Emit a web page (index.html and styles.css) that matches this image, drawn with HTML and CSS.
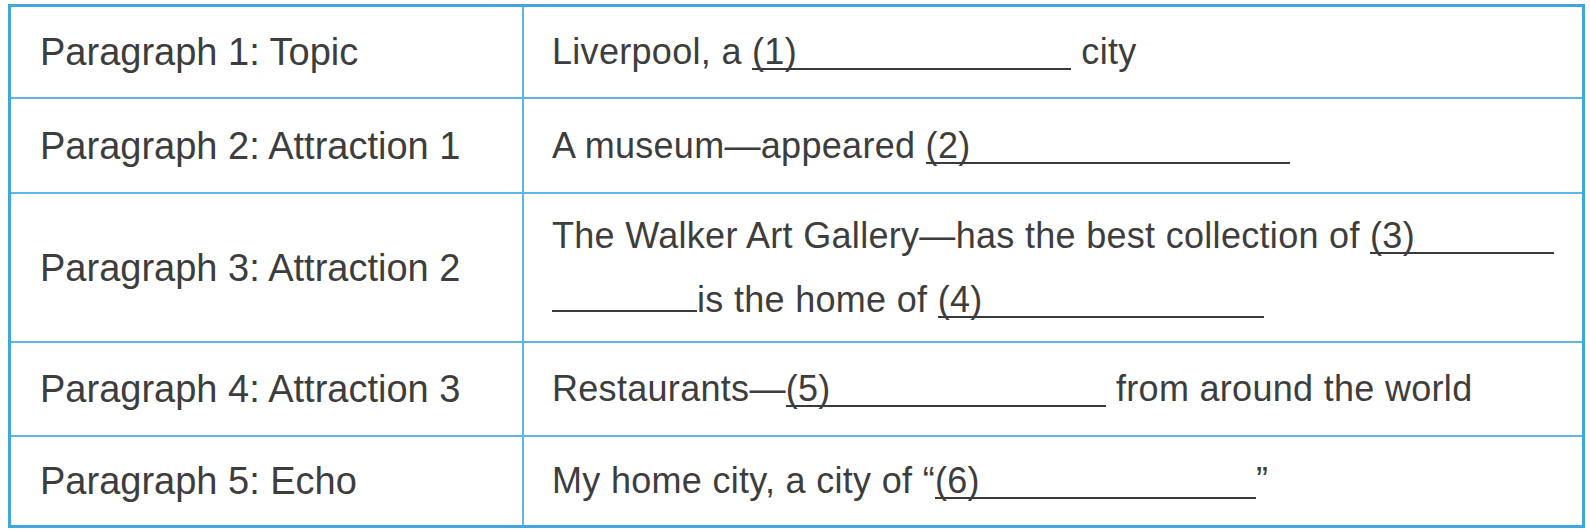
FILE: index.html
```html
<!DOCTYPE html>
<html lang="en">
<head>
<meta charset="utf-8">
<title>Paragraph outline</title>
<link rel="stylesheet" href="styles.css">
</head>
<body>
<table class="outline">
  <tr class="row-a">
    <td class="label">Paragraph 1: Topic</td>
    <td class="content">Liverpool, a <span class="blank b1">(1)</span> city</td>
  </tr>
  <tr class="row-b">
    <td class="label">Paragraph 2: Attraction 1</td>
    <td class="content">A museum—appeared <span class="blank b2">(2)</span></td>
  </tr>
  <tr class="row-c">
    <td class="label">Paragraph 3: Attraction 2</td>
    <td class="content">The Walker Art Gallery—has the best collection of <span class="blank b3">(3)</span><br><span class="blank b3b"></span>is the home of <span class="blank b4">(4)</span></td>
  </tr>
  <tr class="row-d">
    <td class="label">Paragraph 4: Attraction 3</td>
    <td class="content">Restaurants—<span class="blank b5">(5)</span> from around the world</td>
  </tr>
  <tr class="row-e">
    <td class="label">Paragraph 5: Echo</td>
    <td class="content">My home city, a city of “<span class="blank b6">(6)</span>”</td>
  </tr>
</table>
</body>
</html>
```

FILE: styles.css
```css
html, body {
  margin: 0;
  padding: 0;
  background: #ffffff;
}

body {
  padding: 4px 5px 0 8px;
  font-family: "Liberation Sans", Arial, sans-serif;
  color: #3d3d3d;
}

.outline {
  border-collapse: collapse;
  width: 1577px;
  border: 3px solid #3fa7dd;
  font-size: 36px;
}

.outline td {
  border: 2px solid #5db6e6;
  vertical-align: middle;
  line-height: 64px;
  white-space: nowrap;
}

.outline td.label {
  width: 482px;
  padding: 0 0 0 29px;
  font-size: 38px;
}

.outline td.content {
  padding: 0 0 0 28px;
  letter-spacing: 0.3px;
}

.row-a td { height: 90px; }
.row-b td { height: 93px; }
.row-c td { height: 147px; }
.row-d td { height: 92px; }
.row-e td { height: 88px; }

.blank {
  display: inline-block;
  line-height: 32px;
  border-bottom: 2px solid #3a3a3a;
  vertical-align: baseline;
}

.b1 { width: 319px; }
.b2 { width: 364px; }
.b3 { width: 184px; }
.b3b { width: 145px; height: 32px; }
.b4 { width: 326px; }
.b5 { width: 320px; }
.b6 { width: 321px; }
```
